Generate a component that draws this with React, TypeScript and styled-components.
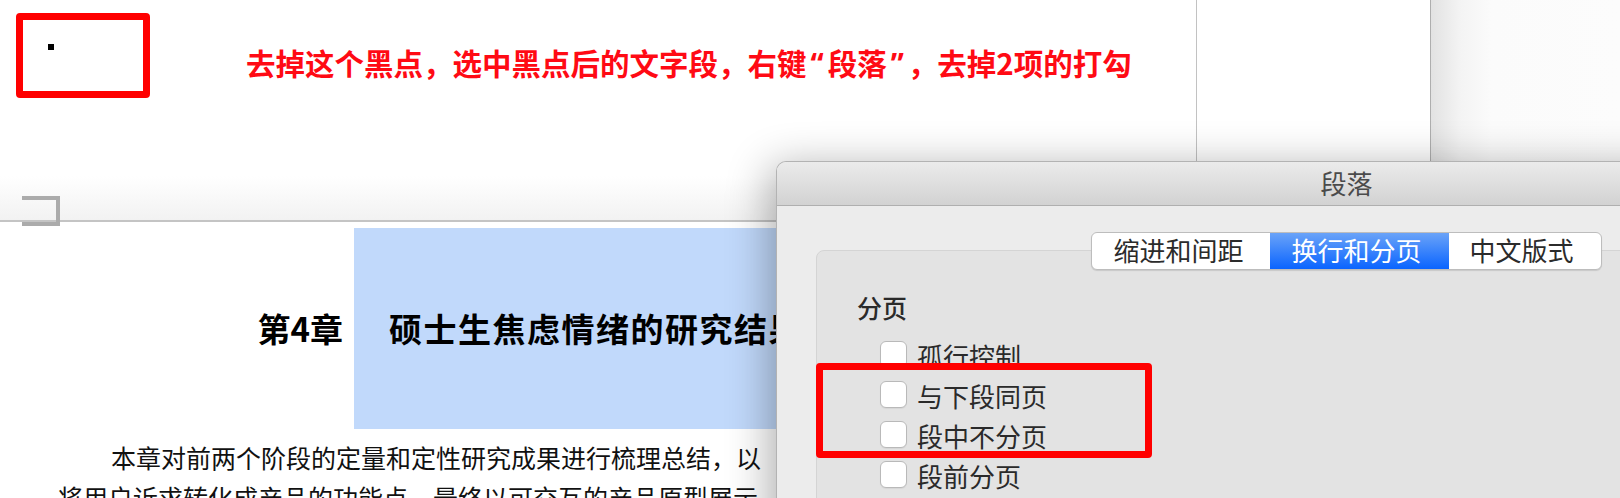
import React from "react";
import styled, { createGlobalStyle } from "styled-components";

const GlobalStyle = createGlobalStyle`
  html, body { margin: 0; padding: 0; background: #ffffff; overflow: hidden; }
  * { box-sizing: border-box; }
`;

const CJK = `"Noto Sans CJK SC", "Noto Sans", sans-serif`;

const Page = styled.div`
  position: relative;
  width: 1620px;
  height: 498px;
  overflow: hidden;
  background: #ffffff;
  font-family: ${CJK};
`;

const TopArea = styled.div`
  display: grid;
  grid-template-columns: 1197px 233px 1fr;
  height: 222px;
  border-bottom: 2px solid #c4c4c4;
`;

const DocColumn = styled.div`
  border-right: 1px solid #c2c2c2;
  background: linear-gradient(to bottom, #ffffff 0, #ffffff 176px, #f2f2f2 220px);
`;

const BlankColumn = styled.div`
  background: linear-gradient(to bottom, #ffffff 0, #ffffff 176px, #f2f2f2 220px);
`;

const SideColumn = styled.div`
  border-left: 1px solid #aeaeae;
  background: linear-gradient(to right, #e2e2e2 0, #f4f4f4 30px, #fbfbfb 60px, #fcfcfc 100%);
`;

const Annotation = styled.div`
  display: flex;
  align-items: flex-start;
`;

const RedFrame = styled.div`
  margin: 13px 0 0 16px;
  width: 134px;
  height: 85px;
  border: 7px solid #ff0000;
  border-radius: 4px;
  padding: 24px 0 0 25px;
`;

const Dot = styled.div`
  width: 6px;
  height: 6px;
  background: #000000;
`;

const Note = styled.div`
  margin: 47px 0 0 96px;
  font-size: 29.5px;
  line-height: 30px;
  font-weight: 700;
  color: #ff0a14;
  white-space: nowrap;
`;

const Quote = styled.span`
  font-family: "Noto Sans", "Liberation Sans", sans-serif;
  padding: 0 4px;
`;

const CropMark = styled.div`
  position: absolute;
  left: 22px;
  top: 196px;
  width: 38px;
  height: 30px;
  border: 4px solid #ababab;
  border-left: none;
`;

const PageBody = styled.div`
  padding-top: 6px;
`;

const HeadingRow = styled.div`
  display: flex;
  align-items: center;
  height: 201px;
`;

const ChapterNo = styled.div`
  width: 354px;
  padding-right: 11px;
  text-align: right;
  font-size: 33px;
  line-height: 201px;
  font-weight: 700;
  color: #000;
  white-space: nowrap;
`;

const Selection = styled.div`
  height: 201px;
  width: 700px;
  background: #c1d9fb;
  padding-left: 35px;
  font-size: 33px;
  line-height: 201px;
  font-weight: 700;
  letter-spacing: 1.5px;
  color: #000;
  white-space: nowrap;
`;

const Paragraph = styled.div`
  margin-top: 8px;
  padding-left: 58px;
  font-size: 25px;
  line-height: 40px;
  color: #111;
`;

const Line = styled.div<{ $indent?: boolean }>`
  white-space: nowrap;
  padding-left: ${(p) => (p.$indent ? "53px" : "0")};
`;

const Dialog = styled.div`
  position: absolute;
  left: 776px;
  top: 161px;
  width: 1141px;
  height: 420px;
  border: 1px solid #b3b3b3;
  border-bottom: none;
  border-radius: 10px 10px 0 0;
  background: #ececec;
  box-shadow: -6px 6px 44px rgba(0, 0, 0, 0.32);
  overflow: hidden;
`;

const TitleBar = styled.div`
  height: 44px;
  background: linear-gradient(to bottom, #ebebeb, #d2d2d2);
  border-bottom: 1px solid #afafaf;
  text-align: center;
  font-size: 26px;
  line-height: 42px;
  color: #4b4b4b;
`;

const DialogBody = styled.div`
  padding: 26px 39px 0;
`;

const Segmented = styled.div`
  position: relative;
  z-index: 1;
  display: flex;
  width: max-content;
  margin: 0 auto -20px;
  border: 1px solid #bdbdbd;
  border-radius: 6px;
  background: #ffffff;
  box-shadow: 0 1px 1px rgba(0, 0, 0, 0.12);
`;

const Segment = styled.div<{ $active?: boolean }>`
  height: 36px;
  padding: 0 27px 0 21px;
  font-size: 26px;
  line-height: 33px;
  white-space: nowrap;
  color: ${(p) => (p.$active ? "#ffffff" : "#2b2b2b")};
  background: ${(p) =>
    p.$active ? "linear-gradient(to bottom, #6aa3f8, #0a64ff)" : "transparent"};
  &:first-child { border-radius: 5px 0 0 5px; }
  &:last-child { border-radius: 0 5px 5px 0; }
`;

const GroupBox = styled.div`
  height: 400px;
  border: 1px solid #d4d4d4;
  border-radius: 8px;
  background: #e3e3e3;
  padding: 41px 0 0 40px;
`;

const GroupLabel = styled.div`
  font-size: 25px;
  line-height: 30px;
  font-weight: 500;
  color: #2a2a2a;
  margin-bottom: 12px;
`;

const OptionRow = styled.label`
  display: flex;
  align-items: center;
  gap: 10px;
  height: 40px;
  padding-left: 23px;
  font-size: 26px;
  line-height: 40px;
  color: #2a2a2a;
`;

const CheckBox = styled.span`
  width: 27px;
  height: 27px;
  flex: none;
  border: 1px solid #b9b9b9;
  border-radius: 6px;
  background: #ffffff;
  box-shadow: 0 1px 1px rgba(0, 0, 0, 0.06);
`;

const OptionText = styled.span`
  padding-top: 4px;
`;

const Callout = styled.div`
  position: absolute;
  z-index: 5;
  left: 816px;
  top: 363px;
  width: 336px;
  height: 95px;
  border: 7px solid #ff0000;
  border-radius: 4px;
`;

const tabs = [
  { label: "缩进和间距", active: false },
  { label: "换行和分页", active: true },
  { label: "中文版式", active: false },
];

const options = ["孤行控制", "与下段同页", "段中不分页", "段前分页"];

export default function App() {
  return (
    <>
      <GlobalStyle />
      <Page>
        <TopArea>
          <DocColumn>
            <Annotation>
              <RedFrame>
                <Dot />
              </RedFrame>
              <Note>
                去掉这个黑点，选中黑点后的文字段，右键<Quote>“</Quote>段落<Quote>”</Quote>，去掉2项的打勾
              </Note>
            </Annotation>
          </DocColumn>
          <BlankColumn />
          <SideColumn />
        </TopArea>
        <PageBody>
          <HeadingRow>
            <ChapterNo>第4章</ChapterNo>
            <Selection>硕士生焦虑情绪的研究结果</Selection>
          </HeadingRow>
          <Paragraph>
            <Line $indent>本章对前两个阶段的定量和定性研究成果进行梳理总结，以</Line>
            <Line>将用户诉求转化成产品的功能点，最终以可交互的产品原型展示</Line>
          </Paragraph>
        </PageBody>
        <CropMark />
        <Dialog>
          <TitleBar>段落</TitleBar>
          <DialogBody>
            <Segmented>
              {tabs.map((t) => (
                <Segment key={t.label} $active={t.active}>
                  {t.label}
                </Segment>
              ))}
            </Segmented>
            <GroupBox>
              <GroupLabel>分页</GroupLabel>
              {options.map((o) => (
                <OptionRow key={o}>
                  <CheckBox />
                  <OptionText>{o}</OptionText>
                </OptionRow>
              ))}
            </GroupBox>
          </DialogBody>
        </Dialog>
        <Callout />
      </Page>
    </>
  );
}
